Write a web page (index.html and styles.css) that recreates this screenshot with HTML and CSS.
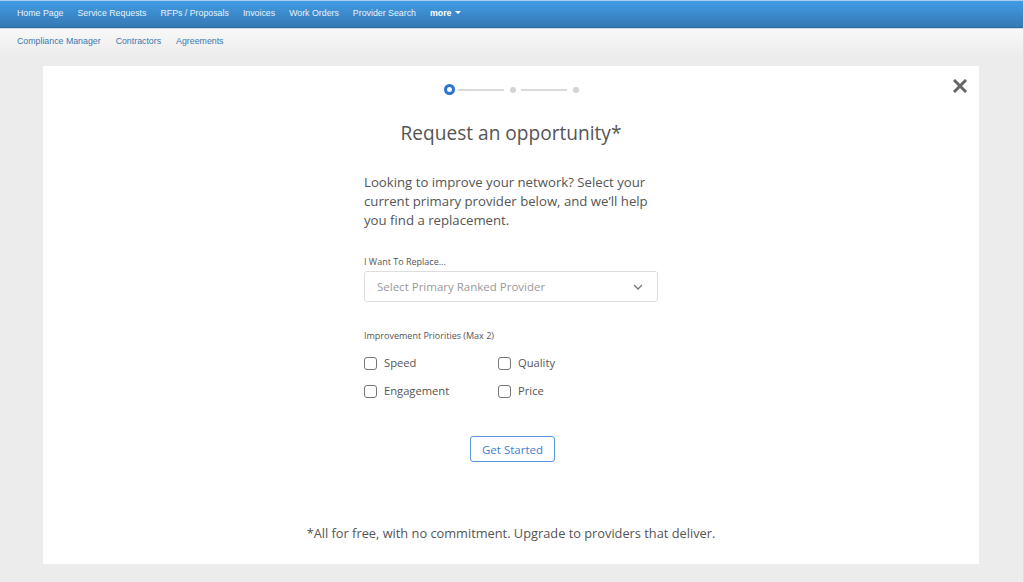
FILE: index.html
```html
<!DOCTYPE html>
<html lang="en">
<head>
  <meta charset="UTF-8" />
  <meta name="viewport" content="width=device-width, initial-scale=1.0"/>
  <title>Request an opportunity</title>
  <link rel="stylesheet" href="styles.css">
</head>
<body>
  <div class="topnav">
    <a href="#">Home Page</a>
    <a href="#">Service Requests</a>
    <a href="#">RFPs / Proposals</a>
    <a href="#">Invoices</a>
    <a href="#">Work Orders</a>
    <a href="#">Provider Search</a>
    <a href="#" class="more">more <span class="caret"></span></a>
  </div>
  <div class="subnav">
    <a href="#">Compliance Manager</a>
    <a href="#">Contractors</a>
    <a href="#">Agreements</a>
  </div>

  <div class="page">
    <div class="card">
      <button class="close" aria-label="Close">
        <svg width="14" height="14" viewBox="0 0 14 14"><path d="M2 2 L12 12 M12 2 L2 12" stroke="#666" stroke-width="3" stroke-linecap="square"/></svg>
      </button>

      <div class="steps">
        <span class="step active"></span>
        <span class="line"></span>
        <span class="step"></span>
        <span class="line"></span>
        <span class="step"></span>
      </div>

      <h1>Request an opportunity*</h1>

      <div class="form">
        <p class="intro">Looking to improve your network? Select your current primary provider below, and we’ll help you find a replacement.</p>

        <label class="small">I Want To Replace...</label>
        <div class="select">
          <span>Select Primary Ranked Provider</span>
          <svg width="10" height="6" viewBox="0 0 10 6"><path d="M1 1 L5 5 L9 1" fill="none" stroke="#777" stroke-width="1.3"/></svg>
        </div>

        <label class="small priorities">Improvement Priorities (Max 2)</label>
        <div class="checks">
          <label class="check"><span class="box"></span>Speed</label>
          <label class="check"><span class="box"></span>Quality</label>
          <label class="check"><span class="box"></span>Engagement</label>
          <label class="check"><span class="box"></span>Price</label>
        </div>
      </div>

      <div class="actions">
        <button class="start">Get Started</button>
      </div>

      <p class="note">*All for free, with no commitment. Upgrade to providers that deliver.</p>
    </div>
  </div>
</body>
</html>
```

FILE: styles.css
```css
body {
  margin: 0;
  background: #ececec;
  font-family: "Open Sans", sans-serif;
  color: #555;
  height: 582px;
  overflow: hidden;
  border-right: 1px solid #ddd;
  box-sizing: border-box;
}

.topnav {
  height: 28px;
  box-sizing: border-box;
  border-top: 1px solid #a9cdee;
  border-bottom: 1px solid #2d6a9c;
  background: linear-gradient(#419ce4, #3579b4);
  display: flex;
  align-items: center;
  padding: 0 0 3px 17px;
  gap: 14px;
}

.topnav a,
.subnav a {
  font-family: "Liberation Sans", Arial, sans-serif;
  font-size: 8.8px;
  text-decoration: none;
}

.topnav a {
  color: #e8f2fb;
}

.topnav a.more {
  color: #fff;
  font-weight: bold;
  display: flex;
  align-items: center;
  gap: 4px;
}

.caret {
  width: 0;
  height: 0;
  border-left: 3px solid transparent;
  border-right: 3px solid transparent;
  border-top: 3px solid #fff;
}

.subnav {
  height: 27px;
  box-sizing: border-box;
  border-top: 1px solid #cfdbe6;
  background: linear-gradient(#f8f8f8, #ededed);
  display: flex;
  align-items: center;
  padding: 0 0 3px 17px;
  gap: 15px;
}

.subnav a {
  color: #3a78b0;
}

.page {
  padding: 11px 44px 0 43px;
}

.card {
  position: relative;
  background: #fff;
  height: 498px;
  box-sizing: border-box;
  padding-top: 18px;
  display: flex;
  flex-direction: column;
  align-items: center;
}

.close {
  position: absolute;
  top: 13px;
  right: 12px;
  background: none;
  border: none;
  padding: 0;
  cursor: pointer;
}

.steps {
  display: flex;
  align-items: center;
  gap: 2px;
  margin-left: 3px;
}

.step {
  width: 6px;
  height: 6px;
  margin: 0 2.5px;
  border-radius: 50%;
  background: #d4d4d4;
}

.step.active {
  width: 5px;
  height: 5px;
  margin: 0;
  background: #fff;
  border: 3px solid #2a73d3;
}

.line {
  width: 46px;
  height: 2px;
  background: #dadada;
  margin: 0 1px;
}

h1 {
  font-weight: normal;
  font-size: 19.1px;
  color: #555;
  margin: 24px 0 0;
  line-height: 28px;
}

.form {
  width: 294px;
  margin-top: 26px;
}

.intro {
  font-size: 13.2px;
  line-height: 19px;
  margin: 0;
}

.small {
  display: block;
  font-size: 9px;
  color: #555;
  margin-top: 25px;
}

.select {
  margin-top: 3px;
  height: 31px;
  box-sizing: border-box;
  border: 1px solid #ddd;
  border-radius: 3px;
  display: flex;
  align-items: center;
  justify-content: space-between;
  padding: 0 14px 0 12px;
  font-size: 11.5px;
  color: #999;
}

.small.priorities {
  margin-top: 27px;
}

.checks {
  display: grid;
  grid-template-columns: 134px auto;
  row-gap: 12px;
  margin-top: 13px;
}

.check {
  display: flex;
  align-items: center;
  font-size: 11.2px;
  color: #555;
  line-height: 16px;
}

.box {
  width: 11px;
  height: 11px;
  border: 1px solid #777;
  border-radius: 3px;
  margin-right: 7px;
}

.actions {
  margin-top: 37px;
  margin-left: 3px;
}

.start {
  font-family: "Open Sans", sans-serif;
  background: #fff;
  border: 1px solid #5b97df;
  border-radius: 3px;
  color: #3f7ecc;
  font-size: 11.5px;
  height: 26px;
  padding: 0 11px;
  cursor: pointer;
}

.note {
  margin: auto 0 22px;
  font-size: 12.8px;
  color: #555;
}
```
